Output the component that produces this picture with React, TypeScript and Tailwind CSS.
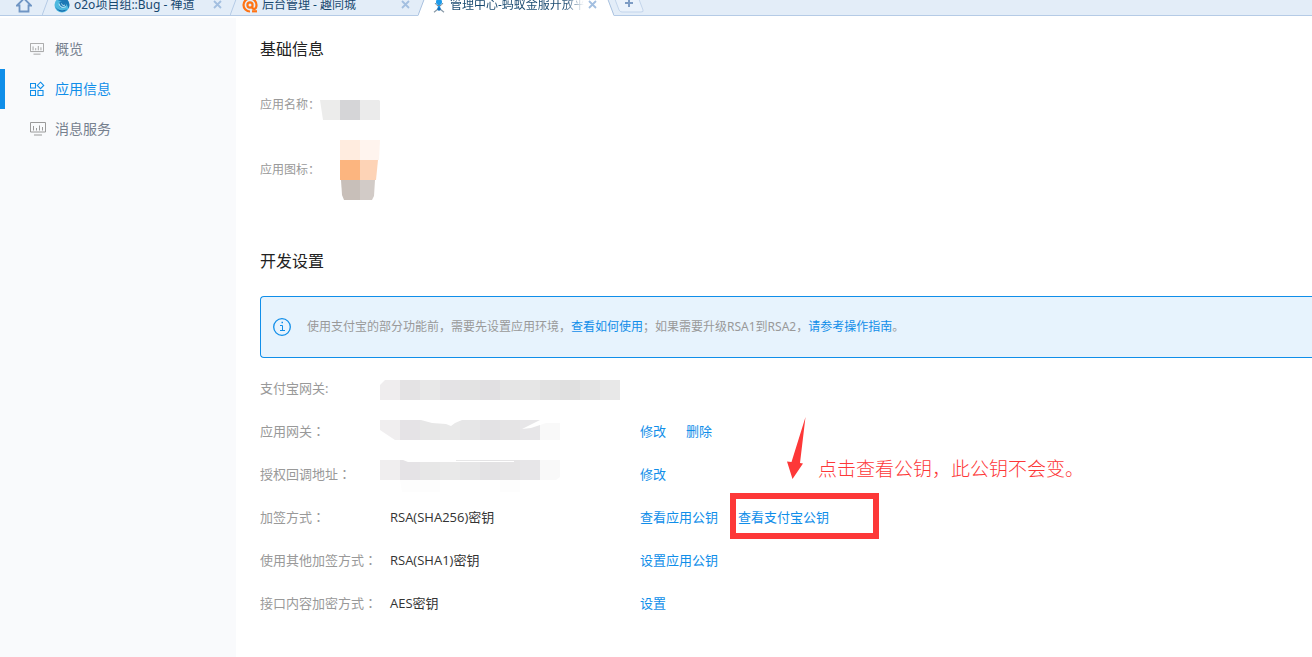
import type { ReactNode } from "react";

type MenuItem = {
  label: string;
  icon: ReactNode;
  active?: boolean;
};

type SettingRow = {
  label: string;
  value: ReactNode;
  actions?: { label: string; marked?: boolean }[];
};

function HomeIcon() {
  return (
    <svg width="16" height="16" viewBox="0 0 16 16" fill="none" stroke="#6f95c4" strokeWidth="1.8">
      <path d="M1 8.5 8 1.5l7 7h-2.5v6h-9v-6z" />
    </svg>
  );
}

function CloseIcon() {
  return (
    <svg width="9" height="9" viewBox="0 0 9 9" stroke="#a3bfe0" strokeWidth="1.8">
      <path d="m1 1 7 7M8 1 1 8" />
    </svg>
  );
}

function SwirlIcon() {
  return (
    <svg width="16" height="16" viewBox="0 0 16 16" fill="none">
      <circle cx="8" cy="8" r="7.5" fill="#4db9df" />
      <path d="M8 .5a7.500 7.500 0 0 1 6.500 11C13 6 9 3 4 4z" fill="#1b78b5" />
      <path d="M1 9c2 4 7 6 12 3-3 4-9 4-12-3z" fill="#1565a8" />
      <circle cx="8.500" cy="7.500" r="3.500" fill="#1b78b5" />
      <path d="M5 6.500c.5 3.500 4 5 7 3" stroke="#a6e0f3" strokeWidth="1.300" />
      <path d="M7.500 6.500c.5 2 2 2.500 3.500 1.500" stroke="#bfe8f6" />
    </svg>
  );
}

function OrangeIcon() {
  return (
    <svg width="16" height="16" viewBox="0 0 16 16" fill="none" stroke="#ff7314" strokeWidth="2.2">
      <path d="M8 14.500A6.500 6.500 0 1 1 14.500 8c0 2.500-1 4-2.500 4s-1.800-1-1.800-2.500" />
      <circle cx="8" cy="8" r="2.600" />
      <path d="M10 14.300h5" />
    </svg>
  );
}

function AntIcon() {
  return (
    <svg width="14" height="16" viewBox="0 0 14 16" fill="none">
      <circle cx="7" cy="5" r="3" fill="#1e9be9" />
      <path d="M7 7v5" stroke="#1e9be9" strokeWidth="2.400" />
      <path d="M3 6l2 2.500h4L11 6" stroke="#7a8c9c" />
      <path d="M6 12l-4 3.300M8 12l4 3.300" stroke="#8a9aa8" strokeWidth="1.200" />
      <circle cx="7" cy="12" r="1.800" fill="#0f6fc0" />
    </svg>
  );
}

function MonitorIcon({ className }: { className: string }) {
  return (
    <svg className={className} viewBox="0 0 16 14" preserveAspectRatio="none" fill="none" stroke="#9a9a9a">
      <path d="M.5.5h15v9.500H.5z" />
      <path d="M3.500 4v4.500M6.500 6v2.500M9.500 3.500v5M12.500 5v3.500" />
      <path d="M4 13h8" />
    </svg>
  );
}

function AppsIcon() {
  return (
    <svg width="16" height="16" viewBox="0 0 16 16" fill="none" stroke="#108ee9" strokeWidth="1.100">
      <path d="M.5 2.500h5v4.500h-5zM.5 9.500h5v5h-5zM8 9.500h5v5H8z" />
      <path d="m10.500 1.200 3.200 3.200-3.200 3.200-3.200-3.200z" />
    </svg>
  );
}

function InfoIcon() {
  return (
    <svg width="18" height="18" viewBox="0 0 18 18" fill="none" stroke="#108ee9">
      <circle cx="9" cy="9" r="8.300" strokeWidth="1.300" />
      <path d="M7 7.500h2.500v5M7 12.500h5" />
      <path d="M8.500 4.500h1.500" strokeWidth="1.500" />
    </svg>
  );
}

function Slant() {
  return (
    <svg width="7" height="22" viewBox="0 0 7 22" className="shrink-0" fill="none">
      <path d="M0 21.500 6.500 4V0" stroke="#b5cbe6" />
      <path d="M0 21.500h7" stroke="#b5cbe6" />
    </svg>
  );
}

function BrowserTab({ icon, title }: { icon: ReactNode; title: string }) {
  return (
    <div className="flex h-[22px] w-[181px] shrink-0 items-center gap-1 border-b border-[#b5cbe6] pr-2 pl-[5px]">
      {icon}
      <span className="flex-1 whitespace-nowrap">{title}</span>
      <button type="button" aria-label="关闭">
        <CloseIcon />
      </button>
    </div>
  );
}

function BrowserBar() {
  return (
    <header className="flex h-4 items-end overflow-hidden bg-[#e3edf8] text-xs leading-5 text-[#17486f]">
      <button type="button" aria-label="主页" className="flex h-[22px] w-[42px] shrink-0 items-center border-b border-[#b5cbe6] pl-4">
        <HomeIcon />
      </button>
      <Slant />
      <BrowserTab icon={<SwirlIcon />} title="o2o项目组::Bug - 禅道" />
      <Slant />
      <BrowserTab icon={<OrangeIcon />} title="后台管理 - 趣同城" />
      <svg width="7" height="22" viewBox="0 0 7 22" className="shrink-0">
        <path d="M0 22 7 3v19z" fill="#fff" />
        <path d="M0 21.500 7 3" stroke="#a9c1df" fill="none" />
      </svg>
      <div className="flex h-[22px] w-[182px] shrink-0 items-center gap-1 border-b border-white bg-white pl-[7px]">
        <AntIcon />
        <span className="w-[134px] bg-linear-to-r from-[#17486f] from-85% to-white bg-clip-text whitespace-nowrap text-transparent">
          管理中心-蚂蚁金服开放平
        </span>
        <button type="button" aria-label="关闭">
          <CloseIcon />
        </button>
      </div>
      <svg width="7" height="22" viewBox="0 0 7 22" className="shrink-0">
        <path d="M7 22 0 3v19z" fill="#fff" />
        <path d="M7 21.500 0 3" stroke="#a9c1df" fill="none" />
      </svg>
      <button type="button" aria-label="新标签页" className="h-[22px] shrink-0 border-b border-[#b5cbe6]">
        <svg width="30" height="21" viewBox="0 0 30 21" fill="none">
          <path d="M-1 0 5 16q1 2 3 2h19q3 0 2-2L23 0" fill="#eaf2fb" stroke="#c3d5eb" />
          <path d="M15 5v8M11 9h8" stroke="#7d9cc4" strokeWidth="2" />
        </svg>
      </button>
      <span className="h-[22px] flex-1 border-b border-[#b5cbe6]" />
    </header>
  );
}

const menu: MenuItem[] = [
  { label: "概览", icon: <MonitorIcon className="h-3 w-[14px]" /> },
  { label: "应用信息", icon: <AppsIcon />, active: true },
  { label: "消息服务", icon: <MonitorIcon className="h-[14px] w-4" /> },
];

function Sidebar() {
  return (
    <aside className="w-[236px] shrink-0 bg-[#f9fafc] pt-[11px]">
      <nav>
        {menu.map((item) => (
          <a
            key={item.label}
            href="#"
            className={
              item.active
                ? "flex h-10 items-center border-l-5 border-[#108ee9] pl-[25px] text-sm text-[#108ee9]"
                : "flex h-10 items-center border-l-5 border-transparent pl-[25px] text-sm text-[#76808e]"
            }
          >
            <span className="flex w-[25px] items-center">{item.icon}</span>
            {item.label}
          </a>
        ))}
      </nav>
    </aside>
  );
}

// Full-width colon sits in the middle of its cell in the TC face
function Colon() {
  return <span className="font-['Noto_Sans_CJK_TC',sans-serif]">：</span>;
}

const gatewayTones = ["#efedee", "#e4e3e4", "#e8e8e8", "#e4e3e5", "#e3e3e3", "#e1e0e2", "#e5e5e5", "#e6e6e6", "#e2e2e2", "#e0e0e0", "#e4e4e4", "#e8e8e8"];
const appTones = ["#f0eeef", "#e5e3e6", "#e7e7e7", "#e9e9e9", "#e6e6e7", "#e3e2e4", "#e5e4e5", "#e7e6e8"];

function Blocks({ tones, y }: { tones: string[]; y: number }) {
  return (
    <>
      {tones.map((tone, i) => (
        <rect key={i} x={i * 20} y={y} width="20" height="20" fill={tone} />
      ))}
    </>
  );
}

const rows: SettingRow[] = [
  {
    label: "支付宝网关:",
    value: (
      <svg width="240" height="43" viewBox="0 -1 240 43">
        <Blocks tones={gatewayTones} y={13} />
        <path d="M0 13h5l-5 5z" fill="#fff" />
      </svg>
    ),
  },
  {
    label: "应用网关",
    value: (
      <svg width="240" height="43" viewBox="0 -1 240 43">
        <Blocks tones={appTones} y={10} />
        <path d="M160 15l6-2h14v17h-20z" fill="#f9f9f9" />
        <path d="M0 20v10h15zM41 10l11 3 14 1 5 2 4-3 7-3zM142 19l18-9h5l-5 5-9 3z" fill="#fff" />
      </svg>
    ),
    actions: [{ label: "修改" }, { label: "删除" }],
  },
  {
    label: "授权回调地址",
    value: (
      <svg width="240" height="43" viewBox="0 -1 240 43">
        <Blocks tones={appTones} y={7} />
        <path d="M160 7h20v17l-4 3h-16z" fill="#f9f9f9" />
        <path d="M20 27h40v12H22zM120 27h20v12h-20z" fill="#fdfdfd" />
        <path d="M23 7h53v1h58v1H28z" fill="#fff" />
      </svg>
    ),
    actions: [{ label: "修改" }],
  },
  {
    label: "加签方式",
    value: "RSA(SHA256)密钥",
    actions: [{ label: "查看应用公钥" }, { label: "查看支付宝公钥", marked: true }],
  },
  { label: "使用其他加签方式", value: "RSA(SHA1)密钥", actions: [{ label: "设置应用公钥" }] },
  { label: "接口内容加密方式", value: "AES密钥", actions: [{ label: "设置" }] },
];

function Annotation() {
  return (
    <>
      <span className="pointer-events-none absolute -top-[14px] -left-2 h-[46px] w-[149px] border-6 border-[#fd3838]" />
      <svg className="absolute bottom-12 left-12" width="21" height="62" viewBox="0 0 21 62" fill="#fd3838">
        <path d="M19.500 0 14 46l3 .5L6.500 62 1 44.500l4.500.5z" />
      </svg>
      <span className="absolute bottom-11 left-20 text-[19px] leading-7 font-light whitespace-nowrap text-[#fd3838]">
        点击查看公钥，此公钥不会变。
      </span>
    </>
  );
}

function SettingsTable() {
  return (
    <table className="mt-2 text-left text-[13px] leading-5">
      <tbody>
        {rows.map((row) => (
          <tr key={row.label} className="h-[43px]">
            <th scope="row" className="w-[120px] p-0 font-normal whitespace-nowrap text-[#999]">
              {row.label}
              {!row.label.endsWith(":") && <Colon />}
            </th>
            <td className="w-[260px] p-0 text-[#333]">
              {typeof row.value === "string" ? (
                <span className="pl-[10px] font-['Open_Sans','Noto_Sans_CJK_SC',sans-serif]">{row.value}</span>
              ) : (
                row.value
              )}
            </td>
            <td className="p-0">
              <div className="flex gap-5">
                {row.actions?.map((action) => (
                  <span key={action.label} className="relative whitespace-nowrap">
                    <a href="#" className="text-[#108ee9]">
                      {action.label}
                    </a>
                    {action.marked && <Annotation />}
                  </span>
                ))}
              </div>
            </td>
          </tr>
        ))}
      </tbody>
    </table>
  );
}

export default function App() {
  return (
    <div className="flex min-h-screen flex-col bg-white font-['Noto_Sans','Noto_Sans_CJK_SC',sans-serif]">
      <BrowserBar />
      <div className="mt-[2px] flex flex-1">
        <Sidebar />
        <main className="min-w-0 flex-1 overflow-hidden pt-[19px] pl-6">
          <h2 className="text-base leading-6 text-[#222]">基础信息</h2>
          <dl className="text-xs leading-5 text-[#999]">
            <div className="mt-8 flex h-[30px] items-start">
              <dt className="w-[60px] pt-[2px]">应用名称：</dt>
              <dd>
                <svg className="mt-[7px]" width="60" height="20" viewBox="0 0 60 20">
                  <path d="M0 0h20v20H3z" fill="#ececeb" />
                  <path d="M20 0h20v20H20z" fill="#d5d5d7" />
                  <path d="M40 0h19l1 1v19H40z" fill="#ebebeb" />
                </svg>
              </dd>
            </div>
            <div className="mt-[17px] flex items-center">
              <dt className="w-20">应用图标：</dt>
              <dd>
                <svg width="40" height="60" viewBox="0 0 40 60">
                  <path d="M0 0h20v20H0z" fill="#ffecdf" />
                  <path d="M20 0h20l-1 20H20z" fill="#fff4ee" />
                  <path d="M0 20h20v20H0z" fill="#fcb57f" />
                  <path d="M20 20h18l-2 20H20z" fill="#fdd3b6" />
                  <path d="M1 40h19v20H4l-2-5z" fill="#c8bfb9" />
                  <path d="M20 40h15l-1 16-2 4H20z" fill="#d2cbc7" />
                </svg>
              </dd>
            </div>
          </dl>

          <h2 className="mt-[49px] text-base leading-6 text-[#222]">开发设置</h2>
          <div className="mt-[23px] flex h-[62px] items-center gap-4 rounded-l border border-r-0 border-[#108ee9] bg-[#e7f3fd] pl-3 text-xs leading-5 whitespace-nowrap text-[#999]">
            <InfoIcon />
            <p>
              使用支付宝的部分功能前，需要先设置应用环境，
              <a href="#" className="text-[#108ee9]">
                查看如何使用
              </a>
              ；如果需要升级RSA1到RSA2，
              <a href="#" className="text-[#108ee9]">
                请参考操作指南
              </a>
              。
            </p>
          </div>
          <SettingsTable />
        </main>
      </div>
    </div>
  );
}
